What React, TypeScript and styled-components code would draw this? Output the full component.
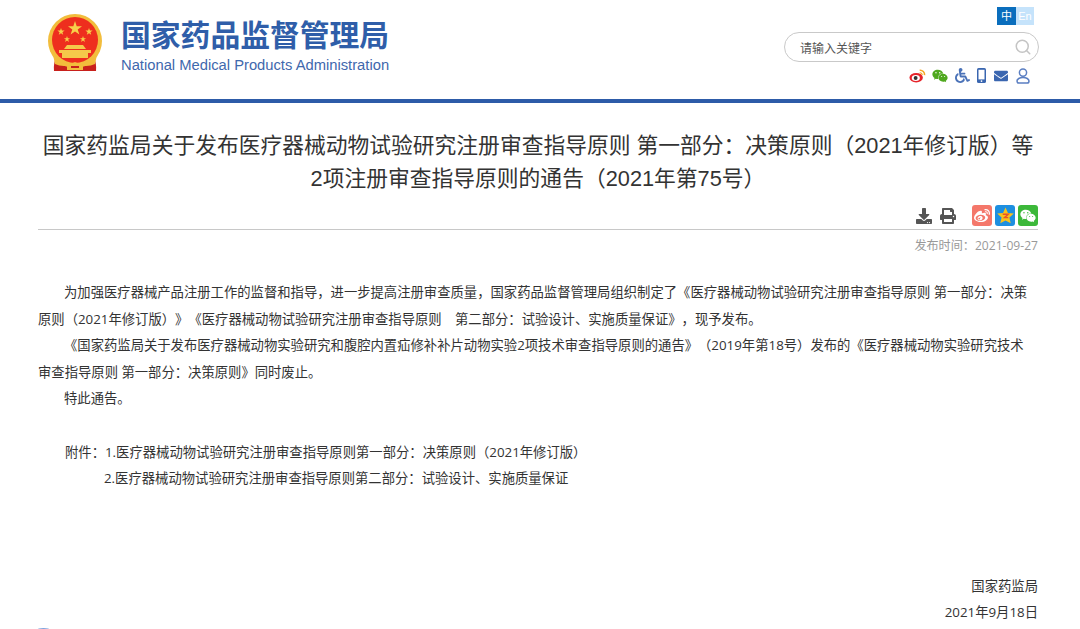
import * as React from 'react';
import styled, { createGlobalStyle } from 'styled-components';
import { FaWeibo, FaWeixin, FaWheelchair, FaEnvelope, FaDownload, FaPrint } from 'react-icons/fa';
import { FiSearch } from 'react-icons/fi';

const CJK = '"Liberation Sans", "Noto Sans CJK SC", sans-serif';
const BODY = '"Open Sans", "Noto Sans CJK SC", sans-serif';

const GlobalStyle = createGlobalStyle`
  html, body {
    margin: 0;
    padding: 0;
    background: #fff;
    height: 629px;
    overflow: hidden;
  }
  body {
    font-family: ${CJK};
    color: #333;
    text-spacing-trim: space-all;
  }
`;

const Header = styled.header`
  height: 99px;
  border-bottom: 4px solid #2d5ba8;
  display: flex;
  justify-content: space-between;
  padding: 0 41px 0 47px;
`;

const Brand = styled.div`
  display: flex;
  gap: 18px;
  padding-top: 14px;
`;

const BrandText = styled.div`
  display: flex;
  flex-direction: column;
  padding-top: 4px;
`;

const BrandName = styled.div`
  font-size: 29.8px;
  line-height: 36px;
  font-weight: 700;
  color: #2f5ea9;
  white-space: nowrap;
`;

const BrandEnglish = styled.div`
  font-size: 14.75px;
  line-height: 18px;
  margin-top: 2px;
  color: #3f68ad;
  white-space: nowrap;
`;

const Tools = styled.div`
  width: 255px;
  display: flex;
  flex-direction: column;
  align-items: flex-end;
  padding-top: 7px;
`;

const LangRow = styled.div`
  display: flex;
  margin-right: 5px;
`;

const Lang = styled.span<{ $active?: boolean }>`
  width: ${(p) => (p.$active ? 19 : 18)}px;
  height: 18px;
  font-size: 11px;
  line-height: 18px;
  text-align: center;
  color: #fff;
  background: ${(p) => (p.$active ? '#0a6ebd' : '#c5e3fb')};
`;

const SearchBox = styled.div`
  width: 232px;
  height: 28px;
  margin-top: 7px;
  border: 1px solid #c9c9c9;
  border-radius: 15px;
  display: flex;
  align-items: center;
  justify-content: space-between;
  padding: 0 6px 0 15px;
  font-size: 12px;
  color: #555;
`;

const SocialRow = styled.div`
  display: flex;
  align-items: center;
  margin-top: 5px;
  margin-right: 5px;
  height: 17px;
`;

const SocialSlot = styled.span<{ $w: number }>`
  width: ${(p) => p.$w}px;
  display: flex;
  align-items: center;
  justify-content: center;
`;

const Main = styled.main`
  padding: 0 42px 0 38px;
`;

const Title = styled.h1`
  margin: 26px 0 0;
  font-size: 21.78px;
  line-height: 33px;
  font-weight: 400;
  text-align: center;
  color: #333;
`;

const ShareRow = styled.div`
  display: flex;
  justify-content: flex-end;
  align-items: center;
  gap: 3px;
  margin-top: 10px;
  padding-bottom: 3px;
  border-bottom: 1px solid #c8c8c8;
`;

const ActionIcons = styled.div`
  display: flex;
  align-items: center;
  gap: 8px;
  margin-right: 13px;
  color: #555;
  font-size: 16px;
`;

const ShareTile = styled.span<{ $bg: string }>`
  width: 20px;
  height: 21px;
  border-radius: 3px;
  background: ${(p) => p.$bg};
  display: flex;
  align-items: center;
  justify-content: center;
  color: #fff;
  font-size: 16px;
`;

const PublishDate = styled.div`
  margin-top: 7px;
  font-family: ${BODY};
  font-size: 12.1px;
  line-height: 17px;
  text-align: right;
  color: #999;
`;

const Article = styled.article`
  margin-top: 25px;
  font-family: ${BODY};
  font-size: 13.34px;
  line-height: 26.6px;
  color: #333;
`;

const Para = styled.p`
  margin: 0;
  padding-right: 3px;
  text-indent: 26px;
`;

const Gap = styled.div`
  height: 26.6px;
`;

const Attachment = styled.p`
  margin: 0;
  padding-left: 66px;
`;

const AttachmentLead = styled.span`
  margin-left: -39px;
`;

const SignOff = styled.div`
  margin-top: 81px;
  text-align: right;
`;

const Sliver = styled.div`
  width: 13px;
  height: 4px;
  margin: 2px 0 0 -1px;
  border-radius: 50% 50% 0 0;
  background: #7fa3de;
`;

const Emblem = () => (
  <svg width="56" height="58" viewBox="0 0 56 58">
    <path d="M10 40 Q6 50 7 57 H49 Q50 50 46 40 Z" fill="#c8201c" />
    <circle cx="28" cy="27" r="27" fill="#f2bd3c" />
    <circle cx="28" cy="26" r="23" fill="#ee2e1e" />
    <path d="M28 7l1.7 5.2H35l-4.3 3.2 1.7 5.2L28 17.4l-4.4 3.2 1.7-5.2L21 12.2h5.3z" fill="#f7d04a" />
    <path d="M14 14l.9 2.6h2.7l-2.2 1.6.8 2.6-2.2-1.6-2.2 1.6.8-2.6-2.2-1.6h2.7z" fill="#f7d04a" />
    <path d="M42 14l.9 2.6h2.7l-2.2 1.6.8 2.6-2.2-1.6-2.2 1.6.8-2.6-2.2-1.6h2.7z" fill="#f7d04a" />
    <path d="M20 22l.8 2.2h2.3l-1.9 1.4.7 2.3-1.9-1.4-1.9 1.4.7-2.3-1.9-1.4h2.3z" fill="#f7d04a" />
    <path d="M36 22l.8 2.2h2.3l-1.9 1.4.7 2.3-1.9-1.4-1.9 1.4.7-2.3-1.9-1.4h2.3z" fill="#f7d04a" />
    <path d="M20 31h16l3 4H17z M12 36h32v3H12z M15 39h26v5H15z" fill="#f5c94a" />
    <path d="M6 41 Q16 54 28 48 Q40 54 50 41 L48 50 Q40 54 28 50 Q16 54 8 50 Z" fill="#f2bd3c" />
    <path d="M20 50h16v6H20z" fill="#f2bd3c" />
    <path d="M24 52h8v2h-8z" fill="#c8201c" />
  </svg>
);

const WeiboColor = () => (
  <svg width="17" height="15" viewBox="0 0 19 17">
    <ellipse cx="8" cy="11" rx="7.6" ry="5.4" fill="#e6232a" />
    <ellipse cx="7.6" cy="11.2" rx="4.6" ry="3.4" fill="#fff" />
    <circle cx="7.4" cy="11.4" r="2.2" fill="#333" />
    <path d="M12 2.5 A5 5 0 0 1 17.5 8" stroke="#f5a623" strokeWidth="1.8" fill="none" />
    <path d="M12 5.4 A2.5 2.5 0 0 1 14.8 8" stroke="#f5a623" strokeWidth="1.3" fill="none" />
  </svg>
);

const PhoneIcon = () => (
  <svg width="9" height="15" viewBox="0 0 9 15">
    <rect x="0" y="0" width="9" height="15" rx="1.6" fill="#3a66b0" />
    <rect x="1.5" y="1.8" width="6" height="9.6" fill="#fff" />
    <circle cx="4.5" cy="13.1" r=".9" fill="#fff" />
  </svg>
);

const UserIcon = () => (
  <svg width="14" height="16" viewBox="0 0 14 16" fill="none" stroke="#5b7fc2" strokeWidth="1.5">
    <circle cx="7" cy="4.6" r="3.6" />
    <path d="M7 9.4c-3.4 0-6 1.7-6 3.6 0 1.2.8 2.1 2 2.1h8c1.2 0 2-.9 2-2.1 0-1.9-2.6-3.6-6-3.6z" />
  </svg>
);

const StarTile = () => (
  <svg width="17" height="17" viewBox="0 0 16 16">
    <path d="M8 .5l2.3 5.1 5.5.6-4.1 3.7 1.2 5.5L8 12.6l-4.9 2.8 1.2-5.5L.2 6.2l5.5-.6z" fill="#fbc21b" />
    <path d="M5.4 6.8h5.2L7 10h3.6" stroke="#e8542a" strokeWidth="1.3" fill="none" />
  </svg>
);

const App: React.FC = () => (
  <>
    <GlobalStyle />
    <Header>
      <Brand>
        <Emblem />
        <BrandText>
          <BrandName>国家药品监督管理局</BrandName>
          <BrandEnglish>National Medical Products Administration</BrandEnglish>
        </BrandText>
      </Brand>
      <Tools>
        <LangRow>
          <Lang $active>中</Lang>
          <Lang>En</Lang>
        </LangRow>
        <SearchBox>
          请输入关键字
          <FiSearch size={18} color="#c4c4c4" />
        </SearchBox>
        <SocialRow>
          <SocialSlot $w={23.5}><WeiboColor /></SocialSlot>
          <SocialSlot $w={23.25}><FaWeixin size={16} color="#4fa81e" /></SocialSlot>
          <SocialSlot $w={21}><FaWheelchair size={15} color="#4a72b8" /></SocialSlot>
          <SocialSlot $w={17.5}><PhoneIcon /></SocialSlot>
          <SocialSlot $w={20.5}><FaEnvelope size={14} color="#3a66b0" /></SocialSlot>
          <SocialSlot $w={23}><UserIcon /></SocialSlot>
        </SocialRow>
      </Tools>
    </Header>
    <Main>
      <Title>
        国家药监局关于发布医疗器械动物试验研究注册审查指导原则 第一部分：决策原则（2021年修订版）等2项注册审查指导原则的通告（2021年第75号）
      </Title>
      <ShareRow>
        <ActionIcons>
          <FaDownload />
          <FaPrint />
        </ActionIcons>
        <ShareTile $bg="#f4776a">
          <FaWeibo />
        </ShareTile>
        <ShareTile $bg="#1d8fe0">
          <StarTile />
        </ShareTile>
        <ShareTile $bg="#3cb83a">
          <FaWeixin />
        </ShareTile>
      </ShareRow>
      <PublishDate>发布时间：2021-09-27</PublishDate>
      <Article>
        <Para>
          为加强医疗器械产品注册工作的监督和指导，进一步提高注册审查质量，国家药品监督管理局组织制定了《医疗器械动物试验研究注册审查指导原则 第一部分：决策原则（2021年修订版）》《医疗器械动物试验研究注册审查指导原则　第二部分：试验设计、实施质量保证》，现予发布。
        </Para>
        <Para>
          《国家药监局关于发布医疗器械动物实验研究和腹腔内置疝修补补片动物实验2项技术审查指导原则的通告》（2019年第18号）发布的《医疗器械动物实验研究技术审查指导原则 第一部分：决策原则》同时废止。
        </Para>
        <Para>特此通告。</Para>
        <Gap />
        <Attachment>
          <AttachmentLead>附件：</AttachmentLead>1.医疗器械动物试验研究注册审查指导原则第一部分：决策原则（2021年修订版）
        </Attachment>
        <Attachment>2.医疗器械动物试验研究注册审查指导原则第二部分：试验设计、实施质量保证</Attachment>
        <SignOff>
          <div>国家药监局</div>
          <div>2021年9月18日</div>
        </SignOff>
      </Article>
      <Sliver />
    </Main>
  </>
);

export default App;
